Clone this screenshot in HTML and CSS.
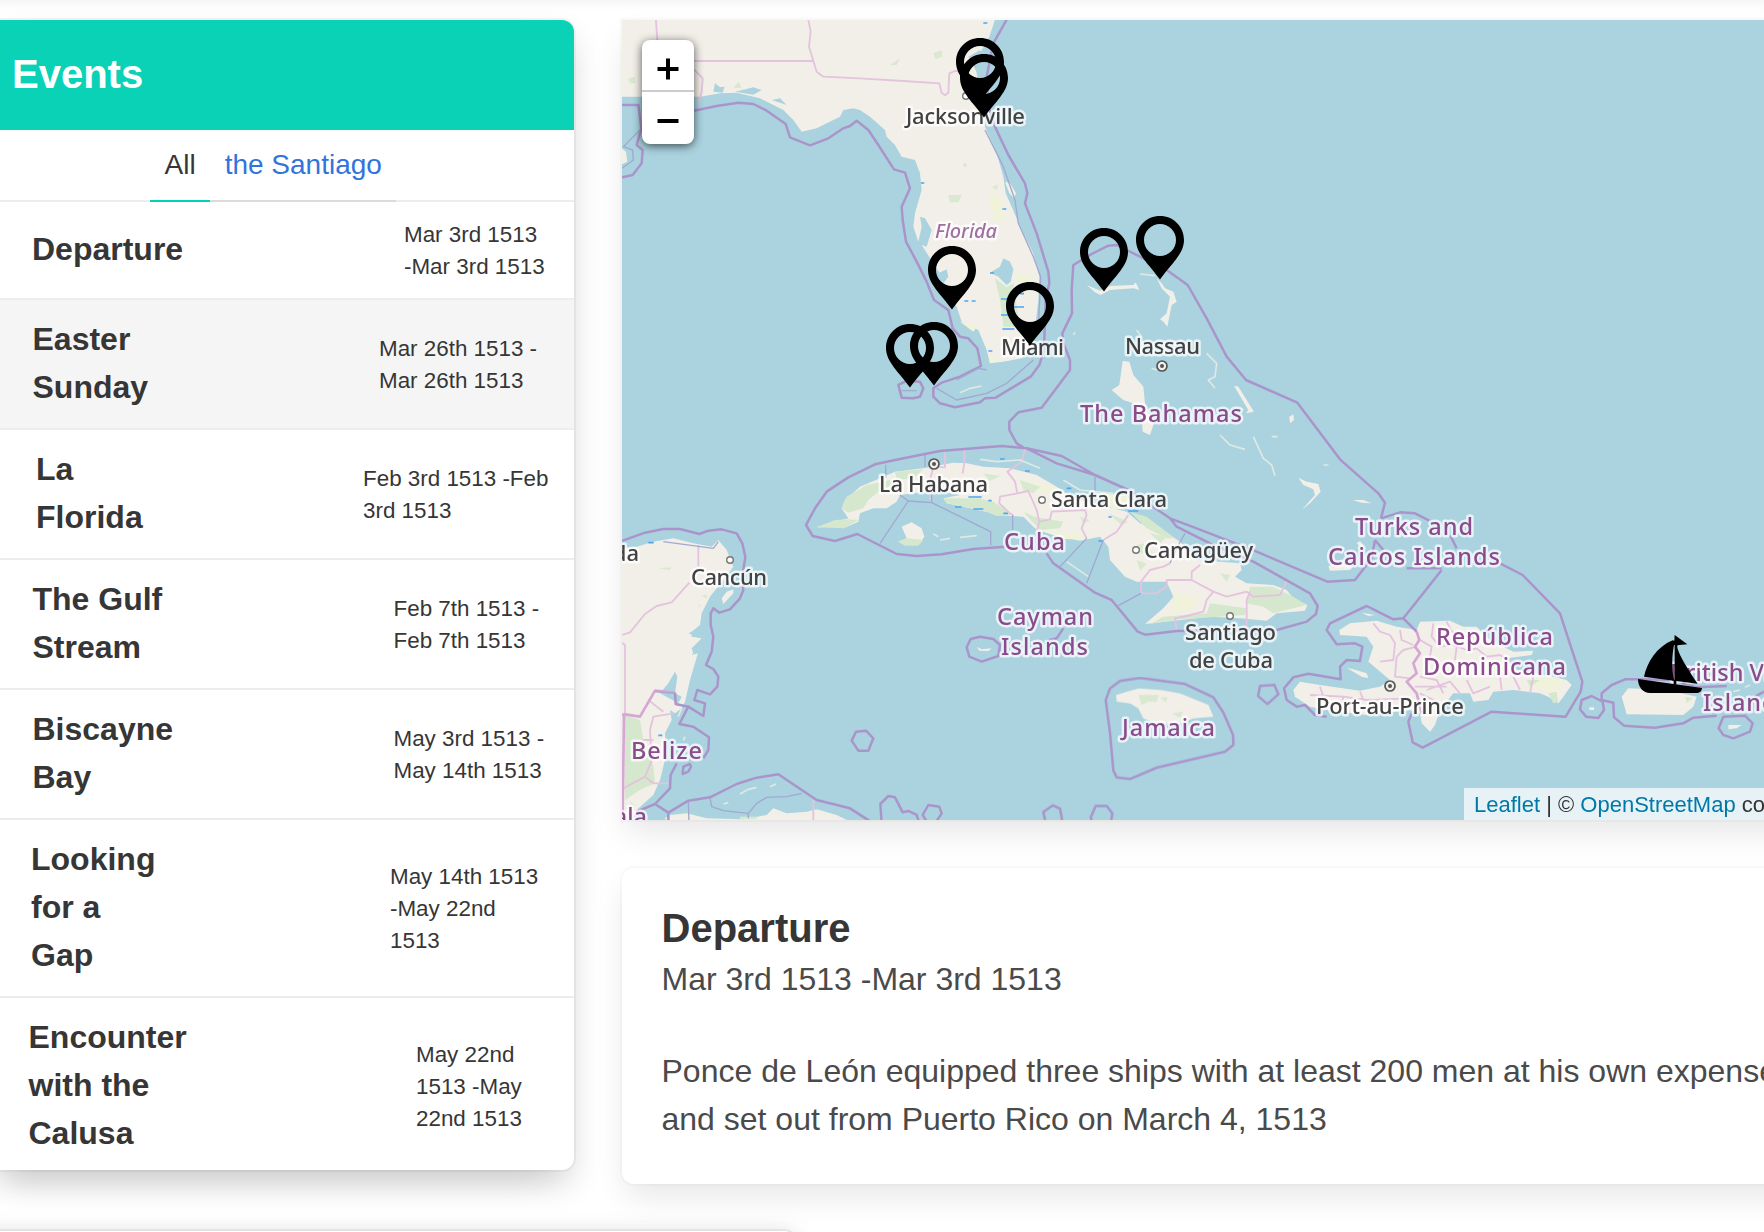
FILE: index.html
```html
<!DOCTYPE html>
<html lang="en">
<head>
<meta charset="utf-8">
<title>Events</title>
<link rel="stylesheet" href="styles.css">
</head>
<body>
<div class="page">
<div class="columns">
  <aside class="panel">
    <header class="panel-header"><h1>Events</h1></header>
    <nav class="tabs"><a class="tab active">All</a><a class="tab">the Santiago</a></nav>
    <ul class="events">
      <li class="event departure"><strong>Departure</strong><span class="date">Mar 3rd 1513<br>-Mar 3rd 1513</span></li>
      <li class="event easter selected"><strong>Easter<br>Sunday</strong><span class="date">Mar 26th 1513 -<br>Mar 26th 1513</span></li>
      <li class="event florida"><strong>La<br>Florida</strong><span class="date">Feb 3rd 1513 -Feb<br>3rd 1513</span></li>
      <li class="event gulf"><strong>The Gulf<br>Stream</strong><span class="date">Feb 7th 1513 -<br>Feb 7th 1513</span></li>
      <li class="event biscayne"><strong>Biscayne<br>Bay</strong><span class="date">May 3rd 1513 -<br>May 14th 1513</span></li>
      <li class="event gap"><strong>Looking<br>for a<br>Gap</strong><span class="date">May 14th 1513<br>-May 22nd<br>1513</span></li>
      <li class="event calusa"><strong>Encounter<br>with the<br>Calusa</strong><span class="date">May 22nd<br>1513 -May<br>22nd 1513</span></li>
    </ul>
  </aside>
  <main class="content">
    <section class="map">
      <svg class="tiles" viewBox="622 20 1200 800" width="1200" height="800">
        <defs>
          <g id="pin"><path fill-rule="evenodd" d="M0 0C13.5 0 24 10.5 24 24C24 38 11 48 0 63.5C-11 48-24 38-24 24C-24 10.500-13.500 0 0 0ZM0 8A16 16 0 1 0 0 40A16 16 0 1 0 0 8Z"/></g>
          <g id="capital"><circle r="5" fill="#efeee8" stroke="#555" stroke-width="1.7"/><circle r="2" fill="#555"/></g>
          <circle id="city" r="3.300" fill="#fff" stroke="#777" stroke-width="1.400"/>
        </defs>
        <rect x="622" y="20" width="1200" height="800" fill="#aad3df"/>

        <g class="terrain">
        <!-- Gulf coast and Florida -->
        <g transform="translate(620 0) scale(.33333)">
          <path class="land" d="M0 50H1128L1108 110 1085 150 1065 200 1075 240 1080 300 1095 380 1130 460 1150 530 1157 580 1175 620 1205 690 1240 760 1258 830 1255 900 1248 960 1240 1040 1205 1075 1150 1085 1110 1090 1100 1050 1075 990 1025 965 1010 920 990 880 975 870 960 820 940 790 905 735 920 740 935 690 915 655 900 650 905 680 895 725 880 680 885 640 905 570 900 520 885 480 845 470 825 435 800 410 795 390 750 350 720 330 700 325 670 330 660 350 620 370 590 385 545 395 520 360 490 330 420 295 350 278 300 280 240 290 0 290Z"/>
          <path class="land" d="M0 440L18 455 22 485 0 495ZM1155 545L1170 550 1188 580 1182 595 1168 580Z"/>
          <path class="water" d="M1110 818L1140 800 1150 775 1170 785 1180 808 1172 845 1160 855 1135 830ZM955 820L980 808 985 830 970 850ZM285 250L300 262 314 260 308 278 280 275ZM345 275L400 262 425 270 400 284ZM455 300L480 295 500 315ZM1045 170L1080 150 1095 175 1085 235 1070 215Z"/>
          <path class="park" d="M1125 835L1160 862 1180 850 1200 980 1150 980 1140 900Z"/>
          <path class="field" d="M1105 580L1145 590 1155 660 1125 665ZM1185 820L1240 830 1235 860 1190 845ZM1020 965L1075 975 1060 995ZM1105 1065L1140 1080 1110 1090Z"/>
          <path class="speck" d="M940 160l25-10 2 20-20 8ZM810 195l30-20-10 20ZM985 585l40 0-10 22-25 0ZM1030 490h10v10h-10ZM1115 560l20-5-5 15ZM340 265l15-20 10 18ZM25 235l20-5 0 20-15 0Z"/>
          <path class="canal" d="M903 549h10M1110 819h12M1143 897h22M1180 921h32M1143 945h22M1147 987h36M1033 903h12M1055 903h12M1105 1053h12M1090 69h12M1147 627h12M1200 881h12"/>
          <path class="state" d="M107 50L112 120M222 183H578M563 50L572 95 567 140 590 215 610 230 720 235 850 243 958 250 965 278 975 286 985 278 988 220 1005 213 1030 215M222 208L248 235 245 275 235 310"/>
          <path class="sea" d="M0 315H55L64 385 50 435 68 450 65 490 38 525 0 533M222 332L290 318 355 308 400 312 440 332 497 372 510 412 570 436 625 415 670 385 690 378 710 362 745 390 775 435 822 508 855 518 870 565 845 620 848 660 858 725 890 785 920 845 942 900 985 930 998 985 1020 1010 1045 1015 1072 1045 1083 1098 1020 1130 965 1148 940 1165 940 1190 960 1210 1005 1222 1080 1207 1095 1195 1127 1193 1232 1130 1258 1095 1272 1050 1277 900 1288 850 1285 815 1250 700 1215 610 1222 580 1215 550 1165 465 1125 380 1105 320 1100 230 1120 130 1165 50M835 1155L860 1143 900 1145 910 1165 900 1190 880 1195 845 1193Z"/>
          <path class="thin" d="M1095 390L1150 500 1185 600 1195 670 1240 770 1262 830 1255 990M1240 1080L1160 1150 1100 1180 1010 1200 950 1165M1100 1110L1075 1105 1010 1140M6 505L40 480 38 450 10 440 60 390M845 1172H890"/>
          <path class="reef" d="M1020 1178L1050 1165 1085 1158"/>
        </g>

        <!-- Bahamas -->
        <g transform="translate(1000 180) scale(.33333)">
          <path class="land" d="M260 315L300 332 330 318 400 315 407 307 418 330 400 325 330 330 302 345 285 337ZM470 295L485 310 495 325 520 335 530 365 515 375 502 440 490 425 480 418 500 400 510 350 485 325ZM368 543L388 545 400 585 430 620 435 670 460 735 450 765 428 755 425 710 400 670 370 660 335 630 358 615ZM868 710L880 703 882 720 870 730ZM702 617L715 620 762 695 738 700 745 690ZM895 893L920 905 955 912 962 935 930 970 905 990 945 945 940 928 910 915ZM1058 960L1090 960 1115 970 1085 968Z"/>
          <path class="reef" d="M420 282L465 287M620 520L650 550 645 590 625 600 645 625M660 765L690 795 735 808M760 770L790 835 815 855 825 888M970 855h15M815 770h18M410 450l15 20M220 465l5-8M455 565l15 5"/>
          <path class="sea" d="M70 803L50 790 28 750 28 725 55 697 125 683 210 570 210 540 190 490 187 460 216 400 215 330 220 255 275 222 325 197 350 195 420 230 500 270 563 315 620 415 680 530 738 600 892 668 1020 838 1135 940 1155 968 1143 1015"/>
        </g>

        <!-- Cuba, Cayman Islands -->
        <g transform="translate(780 400) scale(.33333)">
          <path class="land" d="M185 325L195 300 240 260 300 235 345 215 440 203 520 188 560 190 610 200 690 205 770 225 830 260 850 275 900 300 1040 335 1080 370 1170 405 1200 425 1250 480 1380 490 1385 510 1365 530 1400 550 1480 555 1520 570 1540 595 1582 615 1575 632 1490 640 1460 662 1380 655 1290 650 1200 660 1095 672 1150 625 1180 590 1160 545 1070 545 1035 530 990 480 985 440 960 410 900 422 860 415 790 395 765 385 730 350 650 345 620 335 500 310 490 295 540 285 470 270 360 285 350 305 320 325 280 325 240 340 235 365 190 385 165 380 110 382 150 370 205 355ZM365 380L395 367 425 385 433 410 415 435 375 435 355 425 380 415ZM590 740L605 748 635 745 625 753 598 752Z"/>
          <path class="park" d="M185 325L200 290 260 255 330 240 345 250 290 280 265 300 250 325 205 338ZM490 295L600 295 640 305 700 345 650 348 620 335 500 310ZM345 215L430 208 400 235 350 240ZM730 335L765 350 850 365 840 385 780 390ZM1290 610L1400 625 1395 645 1200 658 1110 672 1150 650 1280 640ZM1410 560L1480 560 1540 590 1580 615 1480 640 1450 620 1400 610ZM110 382L165 360 205 358 235 360 190 385ZM355 425L380 415 430 420 415 437 375 437ZM1050 335L1100 350 1185 415 1160 415 1100 385Z"/>
          <path class="field" d="M700 235L820 260 850 290 760 265ZM790 395L900 400 930 415 860 418ZM950 280L1040 285 1060 320 1000 330ZM1190 575L1260 600 1230 630 1170 635Z"/>
          <path class="speck" d="M610 220l50 8-30 15ZM1060 440l40 30 20-10-30-30ZM1110 400l50 10-20 20ZM720 240l60 20-20 20-30-10ZM900 350l30 10-20 12ZM1320 520l30 5-10 20ZM1070 480l30 12-20 20ZM985 340l60 25-20 10Z"/>
          <path class="canal" d="M565 291h40M580 327h30M525 321h20M625 302h10M670 340h14M735 213h14M860 265h14M1045 333h30M955 423h14M660 177h14M985 351h10"/>
          <path class="state" d="M450 300V240L460 200 495 202V155M553 190V150M553 190L548 220M735 148L725 185 682 215 705 245 712 280 660 290 658 310 690 340 700 345M712 280L745 273 770 330 778 365 770 400M778 365L810 358 815 335 915 330 920 345 905 385 920 415M920 330L915 290M970 420L1010 395 1045 345M1083 580V545L1110 510 1150 500 1170 490M1083 580H1130L1160 560V540H1235L1300 575 1280 600 1270 635 1220 648 1185 655 1190 690M1235 540V515L1260 495M1300 575L1340 590 1400 575 1420 590 1500 585 1520 545M1400 690V600L1410 575"/>
          <path class="thin" d="M317 195V235M435 165V200M945 230V270L930 290M360 285L385 303 455 308 632 395V435M385 303L300 430M698 345V390M970 420L920 550M920 415L840 500M1215 400L1195 435 1170 490M1083 580L1015 617M455 285V308"/>
          <path class="sea" d="M675 440L580 447 485 463 410 468 350 462 232 402 165 423 98 408 78 375 105 325 140 275 205 232 285 193 360 177 480 153 600 143 665 138 740 145 845 168 945 225 1045 270 1170 355 1250 385 1430 455 1500 485M740 145L830 190 945 225M1170 355L1190 380 1290 430 1420 485 1590 580 1613 618 1608 642 1580 665 1490 690 1190 693 1095 704 1073 695 995 600 945 578 820 490 800 460M600 710L640 717 660 735 655 768 605 785 568 770 560 742 572 717ZM850 685L830 715 800 722"/>
          <path class="reef" d="M600 178L650 185 720 180 780 205M850 240L900 270 1000 280M860 485L925 530M460 402l15 8M480 420l30-5M540 412l50-5"/>
        </g>

        <!-- Yucatán, Belize, Honduras -->
        <g transform="translate(620 500) scale(.33333)">
          <path class="land" d="M0 145L50 140 100 125 160 115 220 130 275 140 295 120 320 150 340 200 310 240 270 290 245 340 240 375 215 395 215 410 245 415 215 445 220 460 235 455 210 540 195 605 185 625 165 640 150 630 155 660 135 700 140 760 120 840 100 885 50 930 30 970 0 970ZM340 268L320 275 305 295 310 312 340 280ZM110 970L150 945 200 940 260 955 370 958 440 945 460 925 500 940 560 935 590 928 650 945 700 970Z"/>
          <path class="park" d="M15 645L60 660 70 720 90 760 100 800 105 850 60 870 15 900Z"/>
          <path class="water" d="M120 580L145 550 165 515 172 530 165 580 185 590 175 610ZM80 935L105 930 140 960 110 960ZM205 400L250 380 245 415ZM215 465L240 435 235 460Z"/>
          <path class="speck" d="M115 205l40-3-5 8ZM245 285l15 0 0 12ZM235 310l8 8-6 5ZM30 905l15 10-10 12ZM360 950h50v8h-50Z"/>
          <path class="canal" d="M85 128h16M115 706h12"/>
          <path class="state" d="M235 135V200M208 248L155 307 110 318 75 342 30 397 6 405M6 428L15 435V640M85 600L130 635M160 640L100 650 90 690 92 730 100 770 75 830 10 865M75 830L100 850H145M65 720H100M580 900V970"/>
          <path class="country" d="M0 645L15 643 60 650 105 572 165 578M12 645L8 940"/>
          <path class="thin" d="M130 125L280 145 295 125M205 902L207 970M270 892L275 920 310 932 385 940 410 910 440 892 500 890 545 880M385 940V955M105 575L165 580"/>
          <path class="sea" d="M0 125L75 98 130 87 180 87 238 102 265 92 305 88 350 100 367 130 376 172 368 220 370 270 360 295 330 328 298 338 280 325 272 340V375L280 410 275 455 258 495 280 507 295 530 292 560 270 583 232 570 223 600 255 610 250 648 205 620 178 672 220 680 267 712 265 750 250 775M165 578L167 612 205 620M170 790L152 825 150 865 105 912 50 935M105 912L145 938V970M145 938L205 902 270 892 350 852 410 833 475 823 590 900 690 925 760 970M785 970L781 912 805 888 825 892 848 937 865 933 890 945 898 970M924 970L908 945 925 915 958 920 965 940 945 970M695 722L708 695 738 692 760 715 745 752 715 752ZM190 800L210 792 213 800 205 815 188 822Z"/>
          <path class="reef" d="M360 882L385 868 410 862M450 860L468 852M310 912l15-4M185 625l-10 25M195 710l-5 12"/>
        </g>

        <!-- Jamaica -->
        <g transform="translate(1060 560) scale(.33333)">
          <path class="land" d="M168 405L235 385 300 390 360 400 445 435 460 470 400 475 360 490 290 490 250 475 235 445 210 430 170 425Z"/>
          <path class="speck" d="M235 405l60 0-5 20-25 0-20 10ZM300 412l22 0-5 15ZM335 460l35-5-10 18Z"/>
          <path class="sea" d="M180 363L240 354 375 372 460 412 490 458 519 525 520 555 495 575 290 623 210 657 170 652 160 632 150 520 137 420 150 385ZM600 378L643 375 655 403 622 432 594 408ZM98 790L92 772 107 738 140 738 157 760 152 790M-43 790L-50 756-22 736 0 746 8 790"/>
        </g>

        <!-- Hispaniola, Turks and Caicos, Puerto Rico -->
        <g transform="translate(1300 480) scale(.33333)">
          <path class="land" d="M118 450L150 430 230 422 290 440 350 450 360 425 450 422 490 440 530 440 570 480 640 515 700 512 695 525 620 535 650 570 760 590 800 600 815 615 790 650 775 670 745 650 720 640 640 630 580 635 565 660 520 665 510 640 460 640 440 665 420 690 405 735 390 755 365 730 360 700 330 690 200 705 80 690 30 680-15 650-20 630 0 605 60 615 180 632 240 620 270 600 205 545 220 500 200 470 120 465ZM140 563L160 568 200 580 205 595 185 590ZM185 398L225 405 205 408ZM965 650L985 625 1100 630 1190 650 1180 680 1150 705 980 703ZM1285 735L1325 735 1310 745 1285 748ZM85 258L110 250 160 260 150 270 90 272ZM170 190L180 183 190 195 180 200ZM868 682h14v8h-14Z"/>
          <path class="field" d="M710 590L790 600 770 640 700 620Z"/>
          <path class="park" d="M745 640L770 635 775 665 760 670ZM1155 650L1178 655 1160 668ZM680 600L720 600 690 620Z"/>
          <path class="state" d="M220 430L240 455 270 465 285 490 280 540 240 545M290 530L310 510 350 500M290 530L285 590 330 595M300 450L305 480 340 495M360 480L395 500 390 530 420 560M400 430L395 470 420 500 460 495 500 510 530 505M440 425L455 455 490 470 520 470M470 500L465 540M530 505L560 530 600 525 640 550M490 540L500 560M360 590L410 600 430 640M380 630L450 605 480 640M500 600L520 640 570 620M600 590L605 630M640 590L660 630M700 590L690 640M30 645L130 650 200 660 330 655M60 620L70 650M180 635L190 660M130 650L125 680M360 640L420 670M345 620L440 620"/>
          <path class="country" d="M350 455L358 480 345 500 360 520 340 550 350 580 320 605 350 640 365 700"/>
          <path class="sea" d="M80 710L45 705 15 675-10 680-40 660-48 625-20 592 25 581 122 598 120 560 140 540 180 543 187 500 165 490 110 493 80 450 90 430 200 378 280 418 310 415 350 455M425 270L310 415M600 250L668 285 780 400 847 605 842 635 797 710 575 695 368 803 338 787 325 725 335 700M243 115L300 97 345 100 388 122M450 165L470 205M225 180L250 210M320 265H425M-60 245L82 305 165 300 215 235 225 180M1020 598H975L935 615 905 640V660L940 668 942 712 972 737 1065 743 1150 730 1180 713 1250 707M1020 598L1110 600 1190 622 1280 618M1365 650L1392 635M875 648L908 665 912 690 895 714 858 710 840 688 845 660ZM1270 710L1335 707 1358 730 1350 755 1300 775 1270 765 1256 745Z"/>
          <path class="reef" d="M1300 635L1320 630M1335 622L1350 615"/>
        </g>

        <g class="places">
          <use href="#city" x="966" y="96"/><use href="#city" x="1042" y="500"/><use href="#city" x="1136" y="550"/><use href="#city" x="1230" y="616"/><use href="#city" x="730" y="560"/>
          <use href="#capital" x="1162" y="366"/><use href="#capital" x="934" y="464"/><use href="#capital" x="1390" y="686"/>
        </g>
        <g class="label town">
          <text x="906" y="124" textLength="119">Jacksonville</text>
          <text x="1001" y="355" textLength="63">Miami</text>
          <text x="1125" y="354" textLength="75">Nassau</text>
          <text x="879" y="492" textLength="109">La Habana</text>
          <text x="1051" y="507" textLength="116">Santa Clara</text>
          <text x="1144" y="558" textLength="109">Camagüey</text>
          <text x="691" y="585" textLength="76">Cancún</text>
          <text x="639" y="561" text-anchor="end">da</text>
          <text x="1185" y="640" textLength="91">Santiago</text>
          <text x="1189" y="668" textLength="84">de Cuba</text>
          <text x="1316" y="714" textLength="148">Port-au-Prince</text>
        </g>
        <g class="label nation">
          <text class="region" x="935" y="238" textLength="62">Florida</text>
          <text x="1080" y="422" textLength="162">The Bahamas</text>
          <text x="1004" y="550" textLength="61">Cuba</text>
          <text x="997" y="625" textLength="96">Cayman</text>
          <text x="1001" y="655" textLength="87">Islands</text>
          <text x="1355" y="535" textLength="118">Turks and</text>
          <text x="1328" y="565" textLength="172">Caicos Islands</text>
          <text x="1436" y="645" textLength="117">República</text>
          <text x="1423" y="675" textLength="143">Dominicana</text>
          <text x="1122" y="736" textLength="93">Jamaica</text>
          <text x="631" y="759" textLength="71">Belize</text>
          <text x="647" y="825" text-anchor="end">ala</text>
          <text x="1670" y="681" textLength="146">British Virgin</text>
          <text x="1703" y="711" textLength="86">Islands</text>
        </g>
        </g>

        <use href="#pin" x="980" y="38"/><use href="#pin" x="984" y="54"/><use href="#pin" x="952" y="246"/><use href="#pin" x="1030" y="282"/><use href="#pin" x="910" y="324"/><use href="#pin" x="934" y="322"/><use href="#pin" x="1104" y="228"/><use href="#pin" x="1160" y="216"/>
        <!-- Ship -->
        <g transform="translate(1300 480) scale(.33333)">
          <path d="M1124 465L1162 493 1132 496V503C1140 530 1160 562 1193 611L1129 603V613L1121 612V602L1032 590C1041 548 1070 500 1118 481L1123 482ZM1122 495C1115 530 1115 570 1122 600H1124V495ZM1014 597L1206 624C1206 631 1201 639 1190 639H1050C1030 639 1014 622 1014 597Z" fill-rule="evenodd"/>
        </g>
      </svg>
      <div class="zoom"><button aria-label="Zoom in"><svg width="22" height="22" viewBox="0 0 22 22"><path d="M11 .5v21M.5 11h21"/></svg></button><button aria-label="Zoom out"><svg width="22" height="22" viewBox="0 0 22 22"><path d="M.5 11h21"/></svg></button></div>
      <div class="attribution"><a>Leaflet</a> | © <a>OpenStreetMap</a> contributors</div>
    </section>
    <article class="detail">
      <h2>Departure</h2>
      <p class="when">Mar 3rd 1513 -Mar 3rd 1513</p>
      <p>Ponce de León equipped three ships with at least 200 men at his own expense<br>and set out from Puerto Rico on March 4, 1513</p>
    </article>
  </main>
</div>
<footer class="next-card"></footer>
</div>
</body>
</html>
```
FILE: styles.css
```css
* { box-sizing: border-box; }
body {
  margin: 0;
  background: #fff;
  color: #363636;
  font-family: "Liberation Sans", Arial, Helvetica, sans-serif;
}
.page { height: 1232px; overflow: hidden; padding-top: 20px; box-shadow: inset 0 12px 14px -12px rgba(10, 10, 10, .08); }
.columns { display: flex; align-items: flex-start; gap: 48px; width: 1822px; height: 1211px; }
h1, h2, p, ul { margin: 0; padding: 0; }

.panel {
  width: 574px;
  border-radius: 0 12px 12px 0;
  background: #fff;
  box-shadow: 0 16px 32px -4px rgba(10, 10, 10, .19), 0 0 0 2px rgba(10, 10, 10, .04), -30px 16px 32px -4px rgba(10, 10, 10, .05);
}
.panel-header {
  display: flex;
  align-items: center;
  height: 110px;
  padding-left: 12px;
  border-radius: 0 12px 0 0;
  background: #0ad2b6;
}
.panel-header h1 { color: #fff; font-size: 40px; line-height: 50px; padding-bottom: 3px; }
.tabs {
  display: flex;
  height: 72px;
  padding-left: 150px;
  box-shadow: inset 0 -2px #ededed;
}
.tab {
  padding: 14px 14.5px 0;
  border-bottom: 2px solid #dbdbdb;
  color: #3273dc;
  font-size: 28px;
  line-height: 42px;
}
.tab.active { border-color: #00d1b2; color: #363636; }
.events { list-style: none; }
.event {
  display: flex;
  align-items: center;
  height: 130px;
  padding-left: 32px;
  border-bottom: 2px solid #ededed;
}
.event strong { width: 372px; padding-bottom: 2px; font-size: 32px; line-height: 48px; }
.date { padding-top: 2px; font-size: 22.4px; line-height: 32px; white-space: nowrap; }
.selected { background: #f5f5f5; }
.departure { height: 98px; }
.easter { padding-left: 32.5px; }
.easter strong { width: 346.5px; }
.florida { padding-left: 36px; }
.florida strong { width: 327px; }
.gulf, .biscayne { padding-left: 32.5px; }
.gulf strong, .biscayne strong { width: 361px; }
.gap { height: 178px; padding-left: 31px; }
.gap strong { width: 359px; }
.calusa { height: 172px; padding: 4px 0 0 28.5px; border: 0; }
.calusa strong { width: 387.5px; }

.content { width: 1200px; }
.map { position: relative; height: 800px; box-shadow: 0 16px 32px -4px rgba(10, 10, 10, .1), 0 0 0 2px rgba(10, 10, 10, .02); }
.tiles { display: block; }
.tiles path { stroke-linejoin: round; }
.terrain { filter: blur(.5px); }
.land { fill: #f2efe9; }
.water { fill: #aad3df; }
.park { fill: #d5e8cd; }
.field { fill: #f0f2da; }
.speck { fill: #d9e9cf; }
.canal { fill: none; stroke: #4ba6f3; stroke-width: 5; }
.state { fill: none; stroke: #e4c3de; stroke-width: 5.5; }
.country { fill: none; stroke: #d6a7d3; stroke-width: 8; }
.sea { fill: none; stroke: #aa95cb; stroke-width: 7.5; }
.thin { fill: none; stroke: #a2a8d0; stroke-width: 4; }
.reef { fill: none; stroke: #dde9e5; stroke-width: 5; }
.label {
  font-family: "Noto Sans", sans-serif;
  font-weight: 500;
  paint-order: stroke;
  stroke: rgba(255, 255, 255, .72);
  stroke-width: 5px;
  stroke-linejoin: round;
}
.town { fill: #424242; font-size: 22px; }
.nation { fill: #8a4a8b; font-size: 23.5px; }
.region { fill: #a06fa2; font-size: 20px; font-style: italic; }
.zoom {
  position: absolute;
  left: 20px;
  top: 20px;
  width: 52px;
  border-radius: 8px;
  background: #fff;
  box-shadow: 0 2px 10px rgba(0, 0, 0, .65);
}
.zoom button {
  display: flex;
  align-items: center;
  justify-content: center;
  width: 52px;
  height: 52px;
  padding: 7px 0 0;
  border: 0;
  border-bottom: 2px solid #ccc;
  background: none;
}
.zoom button + button { padding-top: 5px; border: 0; }
.zoom path { stroke: #000; stroke-width: 4; }
.attribution {
  position: absolute;
  left: 842px;
  bottom: 0;
  width: 358px;
  height: 32px;
  padding-left: 10px;
  overflow: hidden;
  background: rgba(255, 255, 255, .7);
  color: #333;
  font-size: 22px;
  line-height: 33px;
  white-space: nowrap;
}
.attribution a { color: #0078a8; }
.detail {
  height: 316px;
  margin-top: 48px;
  padding: 35px 39.5px;
  border-radius: 12px;
  background: #fff;
  color: #4a4a4a;
  box-shadow: 0 16px 32px -4px rgba(10, 10, 10, .1), 0 0 0 2px rgba(10, 10, 10, .02);
  font-size: 32px;
  line-height: 48px;
  white-space: nowrap;
}
.detail h2 { color: #363636; font-size: 40px; line-height: 50px; }
.detail .when { margin: 2px 0 44px; line-height: 48px; }
.next-card {
  width: 826px;
  height: 200px;
  margin-left: -30px;
  border-radius: 12px;
  box-shadow: 0 16px 32px -4px rgba(10, 10, 10, .19), 0 0 22px rgba(10, 10, 10, .1), 0 0 0 2px rgba(10, 10, 10, .06);
}
```
